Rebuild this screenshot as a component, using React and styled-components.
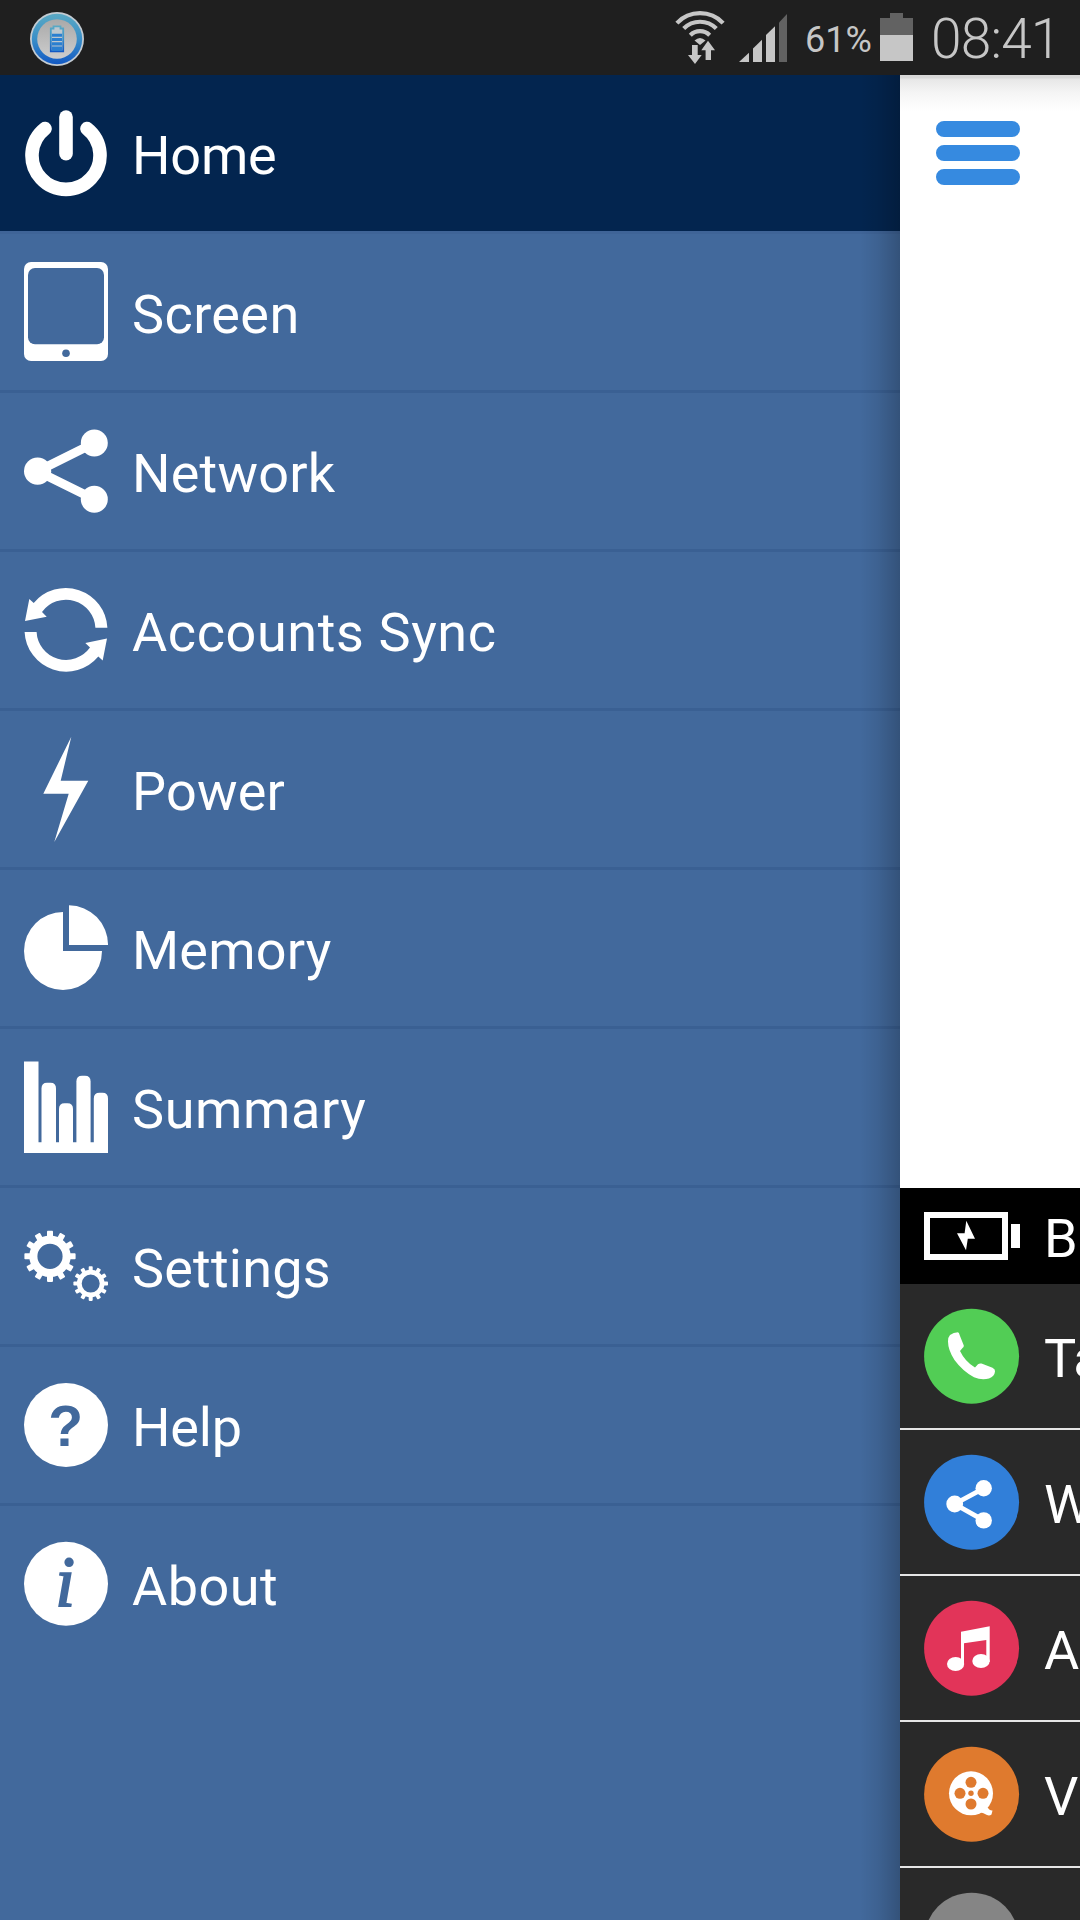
import React from 'react'
import styled, { createGlobalStyle } from 'styled-components'

const GlobalStyle = createGlobalStyle`
    body {
        margin: 0;
        font-family: Roboto, "Noto Sans", sans-serif;
    }
`

const Screen = styled.div`
    display: flex;
    flex-direction: column;
    width: 1080px;
    height: 1920px;
    overflow: hidden;
    background: #42699c;
`

const StatusBar = styled.header`
    display: flex;
    align-items: center;
    height: 75px;
    flex-shrink: 0;
    background: #1f1f1f;
    color: #c6c6c6;
`
const AppBadge = styled.svg`
    margin-left: 29px;
    margin-right: auto;
    margin-top: 3px;
`
const StatusIcon = styled.svg`
    margin-right: ${(props) => props.$gap}px;
`
const Percent = styled.span`
    width: 74px;
    font-size: 36px;
    line-height: 42px;
    padding-top: 4px;
    white-space: nowrap;
`
const Clock = styled.span`
    width: 149px;
    padding-top: 2px;
    font-size: 55px;
    font-weight: 300;
    line-height: 64px;
    letter-spacing: -0.8px;
    white-space: nowrap;
`

const Main = styled.div`
    display: flex;
    flex: 1;
    min-height: 0;
`
const Drawer = styled.nav`
    position: relative;
    width: 900px;
    flex-shrink: 0;
    background: #42699c;

    &::after {
        content: "";
        position: absolute;
        top: 0;
        right: 0;
        bottom: 0;
        width: 40px;
        background: linear-gradient(to right, rgba(0, 0, 0, 0), rgba(0, 0, 0, 0.07) 45%, rgba(0, 0, 0, 0.22));
    }
`
const MenuItem = styled.div`
    display: flex;
    align-items: center;
    gap: 24px;
    height: 156px;
    padding-left: 24px;
    background: ${(props) => (props.$active ? '#03254f' : 'transparent')};
    border-bottom: 3px solid ${(props) => (props.$last ? 'transparent' : props.$active ? '#3f6497' : '#3a6093')};
`
const MenuIcon = styled.svg`
    width: 84px;
    height: 108px;
    flex-shrink: 0;
    fill: #fff;
`
const Label = styled.span`
    padding-top: 5px;
    font-size: 54px;
    line-height: 64px;
    letter-spacing: ${(props) => props.$spacing || 0}px;
    color: #fff;
    white-space: nowrap;
`

const Page = styled.main`
    display: flex;
    flex-direction: column;
    width: 180px;
    overflow: hidden;
    background: #292929;
`
const TopArea = styled.div`
    box-sizing: border-box;
    height: 1113px;
    flex-shrink: 0;
    padding: 46px 36px;
    background: linear-gradient(to bottom, #d8d8d8 0, #d8d8d8 3px, #e7e7e7 4px, #f5f5f5 18px, #fff 36px);
`
const Hamburger = styled.div`
    display: flex;
    flex-direction: column;
    gap: 8px;
    width: 84px;
`
const Bar = styled.div`
    height: 16px;
    border-radius: 8px;
    background: #368ae0;
`
const BatteryRow = styled.div`
    display: flex;
    align-items: center;
    gap: 24px;
    height: 96px;
    flex-shrink: 0;
    padding-left: 24px;
    background: #000;
`
const UsageRow = styled.div`
    display: flex;
    align-items: center;
    gap: 24px;
    height: 144px;
    flex-shrink: 0;
    padding-left: 24px;
    border-bottom: 2px solid #e6e6e6;
`
const UsageIcon = styled.svg`
    width: 96px;
    height: 96px;
    flex-shrink: 0;
    fill: #fff;
`

const Gear = ({ x, y, outer, body, hole, tooth }) => (
    <g transform={`translate(${x} ${y})`}>
        <circle r={(body + hole) / 2} fill="none" stroke="#fff" strokeWidth={body - hole} />
        {[...Array(12)].map((_, i) => (
            <rect
                key={i}
                x={-tooth / 2}
                y={-outer}
                width={tooth}
                height={outer - body + 2}
                rx="0.8"
                transform={`rotate(${i * 30})`}
            />
        ))}
    </g>
)

const syncArrow = 'M83.4 51.7H71.4A29.5 29.5 0 0 0 18 36L22.7 40.7L1 45L5.3 23L9.7 27A41.7 41.7 0 0 1 83.4 51.7Z'

const menu = [
    {
        name: 'Home',
        active: true,
        spacing: -0.2,
        icon: (
            <g fill="none" stroke="#fff" strokeWidth="13.6" strokeLinecap="round">
                <path d="M42 18V54.8" />
                <path d="M21 29.6A34 34 0 1 0 63 29.6" />
            </g>
        ),
    },
    {
        name: 'Screen',
        spacing: 0.4,
        icon: (
            <>
                <rect y="4" width="84" height="99" rx="7" />
                <rect x="4" y="10" width="76" height="76.3" rx="7" fill="#42699c" />
                <circle cx="42" cy="95.3" r="3.8" fill="#42699c" />
            </>
        ),
    },
    {
        name: 'Network',
        spacing: 0.2,
        icon: (
            <>
                <path d="M70.3 26L13.6 54.2L70.3 82.3" fill="none" stroke="#fff" strokeWidth="9" />
                <circle cx="70.3" cy="26" r="13.5" />
                <circle cx="13.6" cy="54.2" r="13.6" />
                <circle cx="70.3" cy="82.3" r="13.5" />
            </>
        ),
    },
    {
        name: 'Accounts Sync',
        spacing: 0.6,
        icon: (
            <>
                <path d={syncArrow} />
                <path d={syncArrow} transform="rotate(180 42 53.8)" />
            </>
        ),
    },
    {
        name: 'Power',
        spacing: 0.2,
        icon: <path d="M47.3 1.7L36.7 45.7H64.3L30.3 107L44.7 58.7H19.3Z" />,
    },
    {
        name: 'Memory',
        spacing: 0.2,
        icon: (
            <>
                <path d="M39 57V18A39 39 0 1 0 78 57Z" />
                <path d="M45 51V11.3A39.3 39.3 0 0 1 84 51Z" />
            </>
        ),
    },
    {
        name: 'Summary',
        spacing: 0.6,
        icon: (
            <>
                <path d="M0 8.5H14.5V89.3H84V100H0Z" />
                <path d="M17.5 92V35.5Q17.5 29.7 23 29.7H26.5Q32 29.7 32 35.5V92Z" />
                <path d="M35 92V56Q35 50.3 40.5 50.3H43.5Q49 50.3 49 56V92Z" />
                <path d="M52.4 92V28.5Q52.4 22.7 58 22.7H61Q66.6 22.7 66.6 28.5V92Z" />
                <path d="M69.8 92V45.5Q69.8 39.7 75.5 39.7H78.5Q84 39.7 84 45.5V92Z" />
            </>
        ),
    },
    {
        name: 'Settings',
        spacing: 0.2,
        icon: (
            <>
                <Gear x={26} y={44.3} outer={25.6} body={20.7} hole={12.6} tooth={6} />
                <Gear x={66.7} y={71.6} outer={17.3} body={13.8} hole={9} tooth={4} />
            </>
        ),
    },
    {
        name: 'Help',
        spacing: -0.2,
        icon: (
            <>
                <circle cx="42" cy="54" r="42" />
                <text x="41.6" y="75" textAnchor="middle" fontFamily="Liberation Sans, sans-serif" fontWeight="700" fontSize="57" fill="#42699c">?</text>
            </>
        ),
    },
    {
        name: 'About',
        spacing: 0.5,
        icon: (
            <>
                <circle cx="42" cy="53.8" r="42" />
                <text x="41.2" y="75.5" textAnchor="middle" fontFamily="Liberation Serif, serif" fontStyle="italic" fontSize="71" fill="#42699c" stroke="#42699c" strokeWidth="1.8">i</text>
            </>
        ),
    },
]

const usage = [
    {
        name: 'Ta',
        color: '#52cd55',
        icon: <path d="M26 27Q29.5 24.5 34 24.3Q35 24.5 36 28L39.8 37.5Q40 39 38.5 40L36 43Q41 53.5 51 59.6L54 56.3Q55.5 55 57.5 55.6L68.5 59.8Q71.5 61.5 71 63.5Q70.5 68.5 65 70.4Q58 72.5 50 69.3Q38.5 63 30.5 52Q24 42 24 33.5Q24 29 26 27Z" />,
    },
    {
        name: 'W',
        color: '#317fd9',
        icon: (
            <>
                <path d="M59.7 34.3L30.7 50L59.7 66.4" fill="none" stroke="#fff" strokeWidth="4.8" />
                <circle cx="59.7" cy="34.3" r="8.2" />
                <circle cx="30.7" cy="50" r="8.4" />
                <circle cx="59.7" cy="66.4" r="8.2" />
            </>
        ),
    },
    {
        name: 'A',
        color: '#e23459',
        icon: (
            <>
                <path d="M37 31.7L65.7 26.3V62H62.3V40L40 43.3V64H37Z" />
                <ellipse cx="31.6" cy="64" rx="8.6" ry="7" />
                <ellipse cx="57" cy="61" rx="8.7" ry="7" />
            </>
        ),
    },
    {
        name: 'V',
        color: '#df7a2e',
        icon: (
            <>
                <circle cx="47" cy="47.3" r="22" />
                <path d="M55 66Q60 67 63 69Q65.5 70 67.5 68.5L68.5 64.5Q66 65 63 61Z" />
                <g fill="#df7a2e">
                    <circle cx="47" cy="36.3" r="5.5" />
                    <circle cx="47" cy="58" r="5.5" />
                    <circle cx="36" cy="47.3" r="5.5" />
                    <circle cx="59" cy="47.3" r="5.5" />
                    <circle cx="47" cy="47.3" r="2.7" />
                </g>
            </>
        ),
    },
    { name: '', color: '#858585', icon: null },
]

const Status = () => (
    <StatusBar>
        <AppBadge width="56" height="56" viewBox="0 0 56 56">
            <defs>
                <linearGradient id="ring" x1="0" y1="0" x2="0" y2="1">
                    <stop offset="0" stopColor="#5aa9c4" />
                    <stop offset="0.5" stopColor="#3a8fc8" />
                    <stop offset="1" stopColor="#1259c4" />
                </linearGradient>
                <linearGradient id="face" x1="0" y1="0" x2="0" y2="1">
                    <stop offset="0" stopColor="#a9a9a9" />
                    <stop offset="1" stopColor="#cdcdcd" />
                </linearGradient>
            </defs>
            <circle cx="28" cy="28" r="27" fill="#c3cbd2" />
            <circle cx="28" cy="28" r="25.2" fill="url(#ring)" />
            <circle cx="28" cy="28" r="19.8" fill="url(#face)" />
            <path d="M21.8 17.5H24.5V15.3H31.5V17.5H34.2V40.3H21.8Z" fill="#bdc7ce" stroke="url(#ring)" strokeWidth="1.8" />
            <path d="M23 22.8H33V25.8H23ZM23 27H33V30H23ZM23 31.2H33V34.4H23ZM23 35.6H33V40H23Z" fill="#2b7fd0" />
        </AppBadge>
        <StatusIcon $gap={14} width="50" height="75" viewBox="675 0 50 75">
            <g fill="none" stroke="#c6c6c6" strokeWidth="4.2">
                <path d="M676.9 23.1A31.8 31.8 0 0 1 723.1 23.1" />
                <path d="M683.7 28.5A23.1 23.1 0 0 1 716.3 28.5" />
                <path d="M690.3 35.2A13.7 13.7 0 0 1 709.7 35.2" />
            </g>
            <g fill="#c6c6c6">
                <path d="M694.5 40.5Q700 35.5 705.5 40.5L700 45Z" />
                <path d="M692 45H697.7V55H701.7L695 64L688 55H692Z" />
                <path d="M705.6 60V50.3H701.3L708 40.7L715 50.3H711V60Z" />
            </g>
        </StatusIcon>
        <StatusIcon $gap={17} width="49" height="75" viewBox="739 0 49 75">
            <g fill="#c6c6c6">
                <path d="M739 62L749 52.7V62Z" />
                <path d="M753 62V48.5L762 39.7V62Z" />
                <path d="M766 62V35L775 26.3V62Z" />
            </g>
            <path d="M779 62V22.5L787 14V62Z" fill="#626262" />
        </StatusIcon>
        <Percent>61%</Percent>
        <StatusIcon $gap={17} width="35" height="75" viewBox="879 0 35 75">
            <path d="M880 35V18H890V13H903V18H913V35Z" fill="#626262" />
            <path d="M880 35H913V61H880Z" fill="#c6c6c6" />
        </StatusIcon>
        <Clock>08:41</Clock>
    </StatusBar>
)

const App = () => {
    return (
        <Screen>
            <GlobalStyle />
            <Status />
            <Main>
                <Drawer>
                    {menu.map((item, index) => (
                        <MenuItem key={item.name} $active={item.active} $last={index === menu.length - 1}>
                            <MenuIcon viewBox="0 0 84 108">{item.icon}</MenuIcon>
                            <Label $spacing={item.spacing}>{item.name}</Label>
                        </MenuItem>
                    ))}
                </Drawer>
                <Page>
                    <TopArea>
                        <Hamburger>
                            <Bar />
                            <Bar />
                            <Bar />
                        </Hamburger>
                    </TopArea>
                    <BatteryRow>
                        <UsageIcon viewBox="0 0 96 96">
                            <rect x="3" y="27" width="78" height="42" fill="none" stroke="#fff" strokeWidth="6" />
                            <rect x="87" y="36" width="9" height="24" />
                            <path d="M42.3 32.7L51 50.7H43.8L42 62.3L33 45.2H40.6Z" />
                        </UsageIcon>
                        <Label>B</Label>
                    </BatteryRow>
                    {usage.map((item) => (
                        <UsageRow key={item.color}>
                            <UsageIcon viewBox="0 0 96 96">
                                <circle cx="47.6" cy="48.2" r="47.5" fill={item.color} />
                                {item.icon}
                            </UsageIcon>
                            <Label>{item.name}</Label>
                        </UsageRow>
                    ))}
                </Page>
            </Main>
        </Screen>
    )
}

export default App
